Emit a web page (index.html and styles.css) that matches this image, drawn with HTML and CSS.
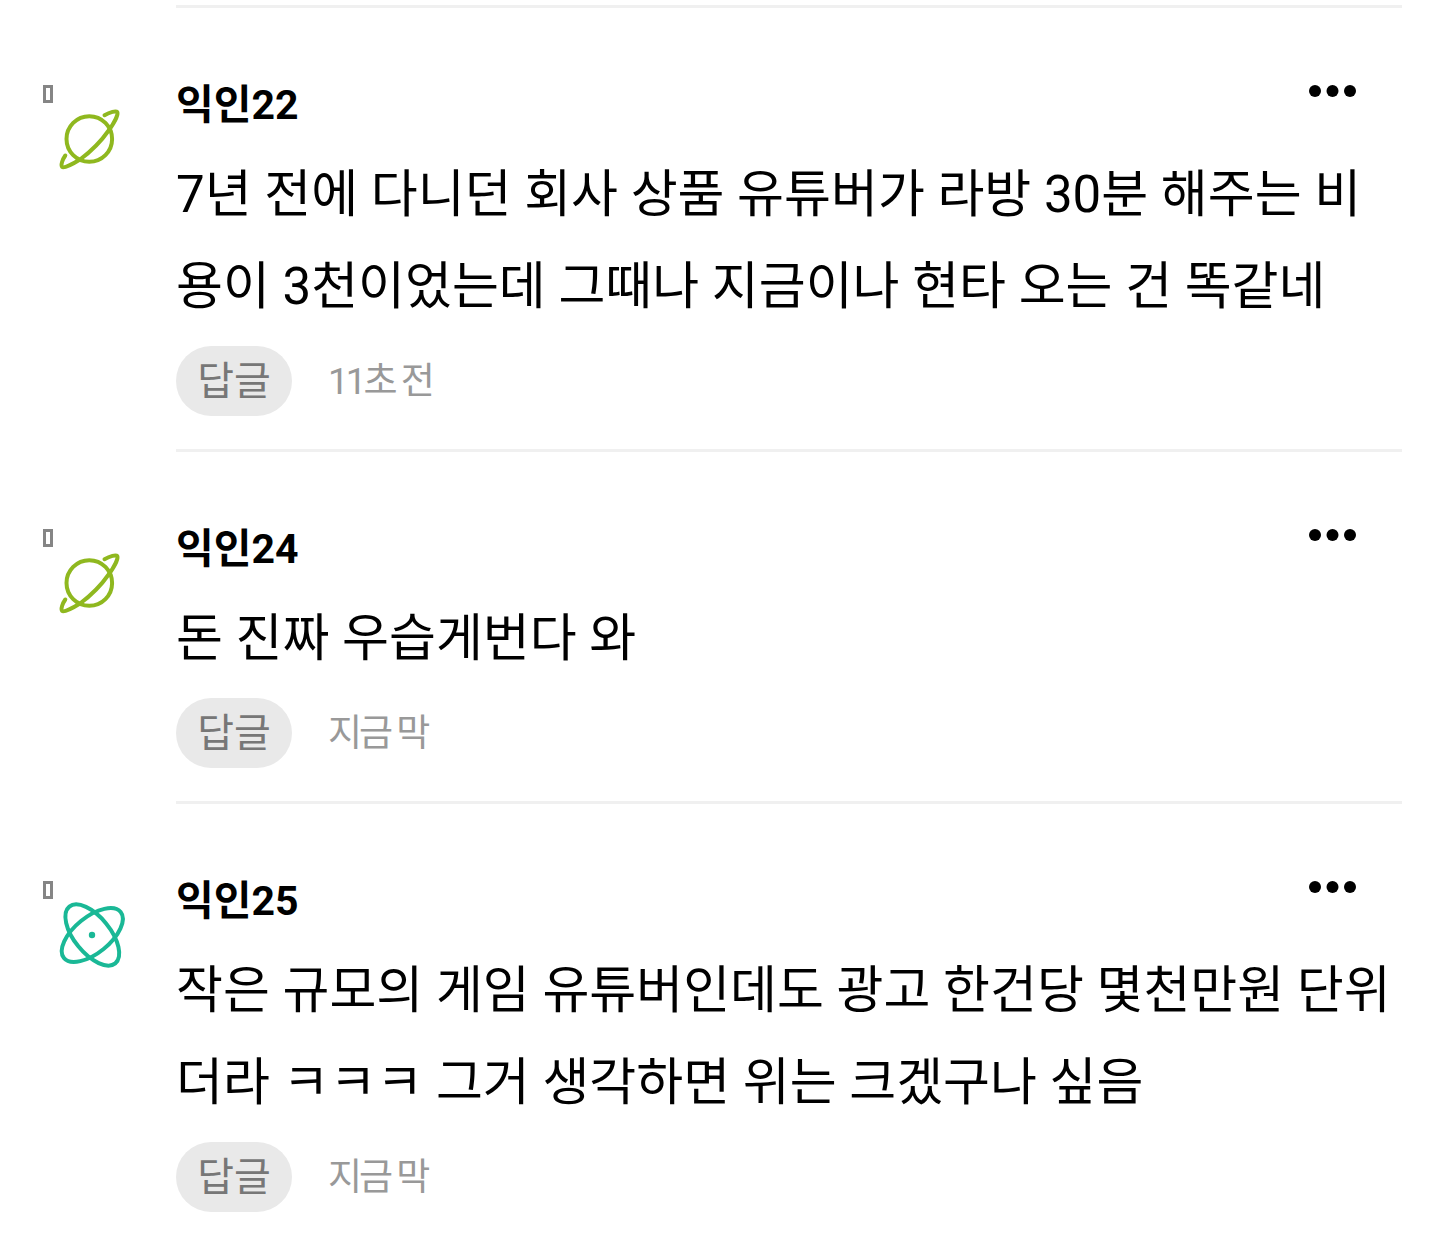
FILE: index.html
```html
<!DOCTYPE html>
<html lang="ko">
<head>
<meta charset="utf-8">
<meta name="viewport" content="width=device-width, initial-scale=1">
<title>댓글</title>
<link rel="stylesheet" href="styles.css">
</head>
<body>
<svg class="defs" aria-hidden="true">
  <symbol id="planet" viewBox="0 0 96 96">
    <g fill="none" stroke="#8fb81f" stroke-width="4" stroke-linecap="round" stroke-linejoin="round">
      <circle cx="49.3" cy="55" r="22.8"/>
      <path d="M64.500 31.200C70 28 76 26.500 77.300 28C78.500 30.500 74 39 69 46C62 56 51 67.500 40 75.500C32 80.500 24 84.500 22.200 83C20.500 81 22.500 75.500 25.300 71.500"/>
    </g>
  </symbol>
  <symbol id="atom" viewBox="0 0 96 96">
    <g fill="none" stroke="#1ab896" stroke-width="4">
      <ellipse cx="52.300" cy="55" rx="36.500" ry="18" transform="rotate(51 52.300 55)"/>
      <ellipse cx="52.300" cy="55" rx="36.500" ry="18" transform="rotate(-39 52.300 55)"/>
    </g>
    <circle cx="52" cy="55" r="3.200" fill="#1ab896"/>
  </symbol>
  <symbol id="more" viewBox="0 0 48 14">
    <circle cx="6" cy="7" r="6"/><circle cx="23.500" cy="7" r="6"/><circle cx="41" cy="7" r="6"/>
  </symbol>
</svg>
<main class="comments">
  <article class="comment">
    <div class="avatar"><span class="badge"></span><svg class="icon"><use href="#planet"/></svg></div>
    <div class="body">
      <header class="head"><h2 class="name">익인22</h2><button class="more" aria-label="더보기"><svg class="dots"><use href="#more"/></svg></button></header>
      <p class="text">7년 전에 다니던 회사 상품 유튜버가 라방 30분 해주는 비용이 3천이었는데 그때나 지금이나 현타 오는 건 똑같네</p>
      <footer class="foot"><button class="reply">답글</button><span class="time">11초 전</span></footer>
    </div>
  </article>
  <article class="comment">
    <div class="avatar"><span class="badge"></span><svg class="icon"><use href="#planet"/></svg></div>
    <div class="body">
      <header class="head"><h2 class="name">익인24</h2><button class="more" aria-label="더보기"><svg class="dots"><use href="#more"/></svg></button></header>
      <p class="text">돈 진짜 우습게번다 와</p>
      <footer class="foot"><button class="reply">답글</button><span class="time">지금 막</span></footer>
    </div>
  </article>
  <article class="comment">
    <div class="avatar"><span class="badge"></span><svg class="icon"><use href="#atom"/></svg></div>
    <div class="body">
      <header class="head"><h2 class="name">익인25</h2><button class="more" aria-label="더보기"><svg class="dots"><use href="#more"/></svg></button></header>
      <p class="text">작은 규모의 게임 유튜버인데도 광고 한건당 몇천만원 단위더라 ㅋㅋㅋ 그거 생각하면 위는 크겠구나 싶음</p>
      <footer class="foot"><button class="reply">답글</button><span class="time">지금 막</span></footer>
    </div>
  </article>
</main>
</body>
</html>
```
FILE: styles.css
```css
* { box-sizing: border-box; }
body { margin: 0; background: #fff; color: #000; font-family: Roboto, "Noto Sans CJK KR", sans-serif; }
.defs { position: absolute; width: 0; height: 0; }
.comments { padding: 5px 35px 0 40px; }
.comment { display: flex; }
.avatar { position: relative; flex: none; width: 136px; padding-top: 79px; }
.badge { position: absolute; top: 80px; left: 3px; width: 10px; height: 18px; border: 3px solid #858585; }
.icon { display: block; width: 96px; height: 96px; }
.body { flex: 1; min-width: 0; border-top: 3px solid #f0f0f0; padding: 67px 0 33px; }
.head { display: flex; justify-content: space-between; align-items: flex-start; height: 74px; padding-right: 45px; }
.name { margin: 0; font-size: 41px; line-height: 60px; font-weight: 700; }
.more { margin: 0; padding: 9px 0; border: 0; background: none; }
.dots { display: block; width: 48px; height: 14px; }
.text { margin: 0; font-size: 51px; line-height: 92px; word-break: break-all; }
.foot { display: flex; align-items: center; gap: 36px; margin-top: 13px; }
.reply { width: 116px; height: 70px; padding: 2px 0 0; border: 0; border-radius: 35px; background: #e9e9e9; color: #777; font: 400 40px/68px Roboto, "Noto Sans CJK KR", sans-serif; }
.time { padding-top: 2px; color: #999; font-size: 37px; line-height: 68px; letter-spacing: -3px; }
```
